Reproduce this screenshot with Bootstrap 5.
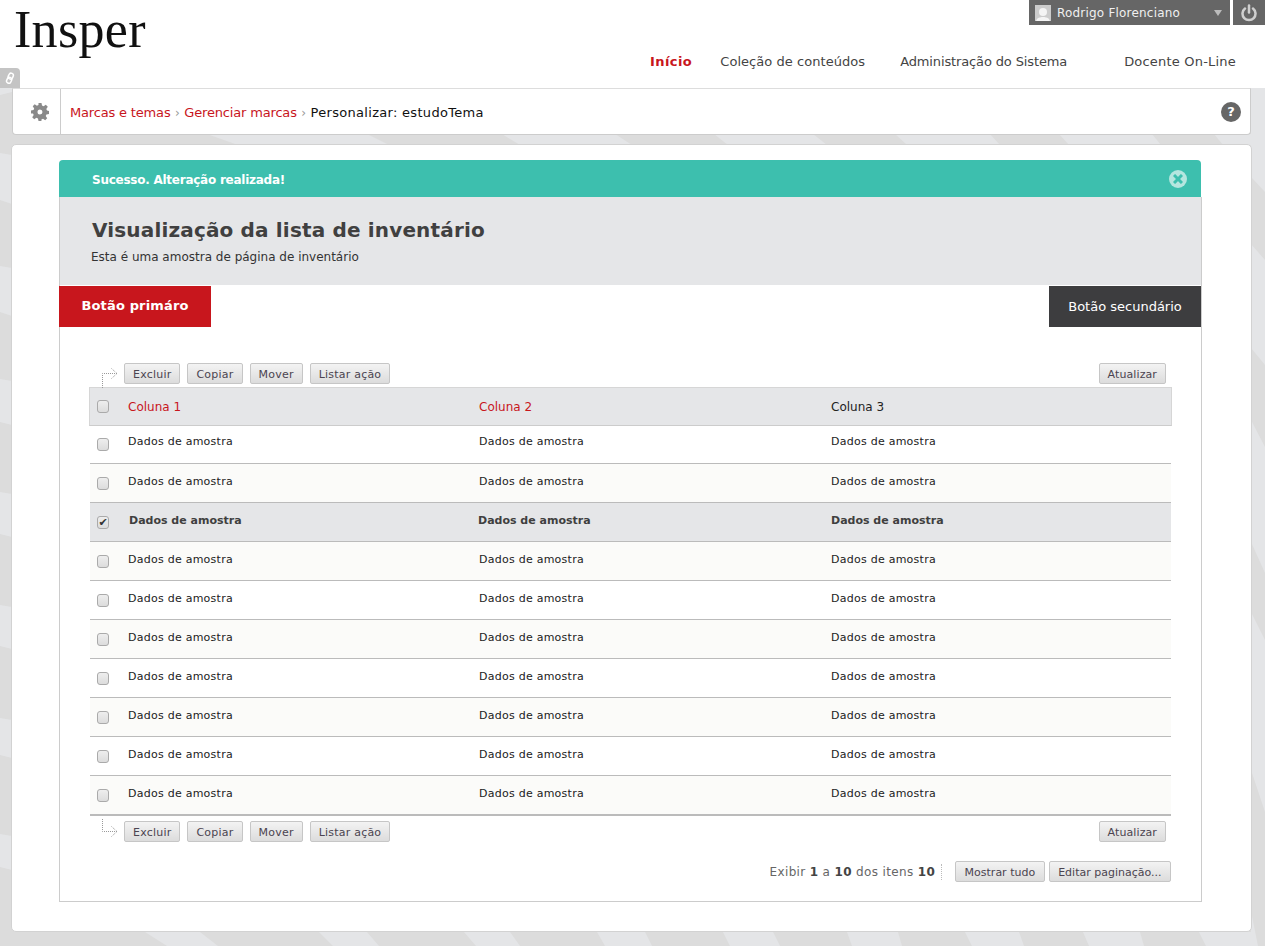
<!DOCTYPE html>
<html lang="pt-BR">
<head>
  <meta charset="UTF-8" />
  <title>Personalizar: estudoTema</title>
  <link href="https://cdn.jsdelivr.net/npm/bootstrap@5.3.0/dist/css/bootstrap.min.css" rel="stylesheet" />
  <style>
    html, body { height: 946px; overflow: hidden; }
    body {
      font-family: "DejaVu Sans", Verdana, sans-serif;
      font-size: 11px;
      color: #222;
      background-color: #dcdcdc;
    }
    .bg-art { position: absolute; left: 0; top: 0; z-index: -1; }
    .top-band { background: #fff; height: 88px; }
    .logo-word { font-family: "Liberation Serif", serif; font-size: 52px; letter-spacing: .3px; line-height: 59px; color: #111; padding-left: 14px; }
    .user-menu { width: 201px; height: 25px; background: #666; color: #f0f0f0; font-size: 12px; letter-spacing: .2px; padding: 0 6px; }
    .power-box { width: 32px; height: 25px; background: #666; margin-left: 3px; }
    .avatar-box { width: 16px; height: 16px; background: #ccc; margin-right: 6px; overflow: hidden; }
    .caret-down { width: 0; height: 0; border-left: 4px solid transparent; border-right: 4px solid transparent; border-top: 6px solid #bbb; margin-right: 2px; }
    .main-nav { padding-right: 29px; margin-top: 27px; font-size: 13px; color: #444; letter-spacing: .05px; }
    .main-nav span { margin-left: 35px; }
    .main-nav .active-tab { color: #c8161d; font-weight: 700; margin-right: -7px; letter-spacing: .45px; }
    .main-nav .admin-tab { letter-spacing: -.13px; }
    .main-nav .last-tab { margin-left: 57px; letter-spacing: .2px; }
    .link-tab { position: absolute; left: 0; top: 68px; width: 20px; height: 20px; background: #c4c4c4; border-top-right-radius: 4px; }
    .crumb-bar { height: 47px; margin: 0 14px 0 12px; background: #fff; border: 1px solid #ccc; border-top-color: #ddd; border-radius: 0 0 4px 4px; font-size: 13px; }
    .crumb-icon { width: 48px; border-right: 1px solid #ccc; padding-left: 6px; }
    .crumb-text { padding: 2px 0 0 9px; }
    .crumb-bar a { color: #c8161d; text-decoration: none; letter-spacing: -.17px; }
    .crumb-sep { color: #999; margin: 0 4.5px; font-size: 12px; }
    .crumb-now { color: #111; letter-spacing: .3px; }
    .help-dot { width: 20px; height: 20px; border-radius: 50%; background: #666; color: #fff; font-weight: 700; font-size: 13px; margin-right: 9px; }
    .page-sheet { margin: 9px 13px 0 11px; height: 788px; background: #fff; border: 1px solid #d2d2d2; border-radius: 5px; padding: 15px 49px 0 47px; }
    .ok-bar { height: 37px; margin-right: 1px; background: #3dbfae; color: #fff; font-weight: 700; font-size: 12px; letter-spacing: -.25px; border-radius: 4px 4px 0 0; padding: 0 14px 0 33px; }
    .ok-text { padding-top: 2px; }
    .close-dot { width: 18px; height: 18px; border-radius: 50%; background: #b5e6df; }
    .inner-box { height: 705px; border: 1px solid #ccc; border-top: 0; }
    .title-band { height: 88px; background: #e5e6e8; padding: 21px 32px 0; }
    .title-band h1 { font-size: 20px; letter-spacing: .16px; font-weight: 700; color: #404040; margin: 0 0 5px; line-height: 25px; }
    .title-band p { font-size: 12px; margin: 0 0 0 -1px; color: #333; }
    .btn-red { width: 152px; height: 41px; margin-top: 1px; margin-left: -1px; padding-bottom: 2px; background: #c8161d; color: #fff; font-weight: 700; font-size: 13px; letter-spacing: .15px; border: 0; border-radius: 0; }
    .btn-dark { width: 152px; height: 41px; margin-top: 1px; background: #3d3d3f; color: #fff; font-size: 13px; border: 0; border-radius: 0; }
    .list-area { padding: 36px 30px 0; }
    .action-row { height: 26px; padding-left: 12px; }
    .action-row.upper { height: 24px; }
    .mini-btn { height: 21px; padding: 2px 8px 0; font-size: 11px; letter-spacing: .22px; line-height: 17px; color: #4b4450; background: linear-gradient(#f3f3f3, #dcdcdc); border: 1px solid #c6c6c6; border-radius: 2px; margin-right: 7px; }
    .mini-btn.flush { margin-right: 5px; letter-spacing: .1px; }
    .arrow-hint { width: 22px; height: 20px; overflow: visible; }
    .grid-row { display: flex; align-items: center; height: 39px; border-bottom: 1px solid #bbb; background: #fff; letter-spacing: .25px; }
    .grid-row.striped { background: #fbfbf9; }
    .grid-row.chosen { background: #e5e6e8; font-weight: 700; color: #3f3f3f; letter-spacing: 0; }
    .grid-row.first { height: 38px; }
    .grid-row.head { background: #e5e6e8; border: 1px solid #d6d6d6; border-bottom-color: #ccc; font-size: 12px; letter-spacing: 0; margin-right: -1px; margin-left: -1px; }
    .grid-row.final { height: 40px; border-bottom: 2px solid #bbb; }
    .cell-check { width: 38px; padding-left: 7px; flex: none; }
    .cell-one { width: 351px; flex: none; }
    .cell-two { width: 352px; flex: none; }
    .cell-text { padding-bottom: 2px; }
    .first .cell-text { padding-bottom: 4px; }
    .final .cell-text { padding-bottom: 1px; }
    .head .cell-text { padding-bottom: 0; }
    .chosen .cell-one { padding-left: 1px; }
    .chosen .cell-two { margin-left: -1px; width: 353px; }
    .box-tick { display: block; width: 12px; height: 13px; background: linear-gradient(#eee, #dcdcdc); border: 1px solid #aaa; border-radius: 3px; color: #333; font-size: 11px; line-height: 11px; text-align: center; }
    .red-head { color: #c8161d; }
    .pager-row { margin-top: 19px; height: 21px; color: #666; font-size: 12px; letter-spacing: .35px; }
    .pager-row .mini-btn { padding: 2px 8.5px 0; letter-spacing: 0; }
    .pager-row .mini-btn.near { margin-right: 4px; }
    .pager-note { border-right: 1px dotted #bbb; padding-right: 6px; margin-right: 13px; height: 16px; line-height: 16px; }
    .pager-note b { color: #444; }
  </style>
</head>
<body class="position-relative">
  <svg class="bg-art" width="1265" height="946" viewBox="0 0 1265 946">
    <g fill="#e4e5e7">
      <path d="M207 134H367L389 145H238z"/>
      <path d="M502 134H615L632 145H520z"/>
      <path d="M714 134H813L827 145H728z"/>
      <path d="M895 134H990L1000 145H907z"/>
      <path d="M1059 134H1152L1161 145H1069z"/>
      <path d="M1214 134H1265V145H1223z"/>
      <path d="M1251 88H1265V946H1251z"/>
      <path d="M145 932H200L218 946H167z"/>
      <path d="M319 932H367L379 946H333z"/>
      <path d="M464 932H510L520 946H476z"/>
      <path d="M597 932H645L652 946H605z"/>
      <path d="M723 932H773L780 946H730z"/>
      <path d="M847 932H898L902 946H852z"/>
      <path d="M965 932H1019L1024 946H972z"/>
      <path d="M1083 932H1140L1144 946H1089z"/>
      <path d="M1199 932H1258L1263 946H1206z"/>
      <path d="M0 88H12V92L0 95z"/>
      <path d="M0 153L12 155V204L0 200z"/>
      <path d="M0 266L12 268V316L0 312z"/>
      <path d="M0 379L12 381V425L0 422z"/>
      <path d="M0 492L12 494V537L0 534z"/>
      <path d="M0 605L12 607V649L0 646z"/>
      <path d="M0 718L12 720V758L0 755z"/>
      <path d="M0 834L12 836V870L0 867z"/>
    </g>
    <g fill="#dcdcdc">
      <path d="M1251 177L1265 192V260L1251 244z"/>
      <path d="M1251 348L1265 365V447L1251 420z"/>
      <path d="M1251 542L1265 573V640L1251 612z"/>
      <path d="M1251 770L1265 812V946H1258L1251 911z"/>
    </g>
  </svg>

  <div class="top-band d-flex justify-content-between">
    <div class="logo-word">Insper</div>
    <div class="d-flex flex-column align-items-end">
      <div class="d-flex">
        <div class="user-menu d-flex align-items-center">
          <span class="avatar-box d-block">
            <svg width="16" height="16" viewBox="0 0 16 16"><circle cx="8" cy="6" r="4" fill="#f4f4f4"/><path d="M1 16c0-4 4-5 7-5s7 1 7 5z" fill="#f4f4f4"/></svg>
          </span>
          <span class="flex-grow-1">Rodrigo Florenciano</span>
          <span class="caret-down"></span>
        </div>
        <div class="power-box d-flex align-items-center justify-content-center">
          <svg width="16" height="18" viewBox="0 0 16 18" fill="none" stroke="#cfcfcf" stroke-width="2.5" stroke-linecap="round"><path d="M8 1.500v7"/><path d="M4 4.500a6.500 6.500 0 1 0 8 0"/></svg>
        </div>
      </div>
      <div class="main-nav d-flex">
        <span class="active-tab">Início</span>
        <span>Coleção de conteúdos</span>
        <span class="admin-tab">Administração do Sistema</span>
        <span class="last-tab">Docente On-Line</span>
      </div>
    </div>
  </div>
  <div class="link-tab d-flex align-items-center justify-content-center">
    <svg width="12" height="12" viewBox="0 0 12 12" fill="none" stroke="#fff" stroke-width="1.5"><rect x="4.500" y="0.800" width="4.500" height="6" rx="2.200" transform="rotate(25 6 4)"/><rect x="3" y="5.200" width="4.500" height="6" rx="2.200" transform="rotate(25 5 8)"/></svg>
  </div>

  <div class="crumb-bar d-flex align-items-center">
    <div class="crumb-icon h-100 d-flex align-items-center justify-content-center">
      <svg width="18" height="18" viewBox="0 0 18 18"><path fill="#8a8a8a" fill-rule="evenodd" d="M7.500 0h3l.5 2.600 1.600.7L14.800 1.800l2 2-1.500 2.200.7 1.600L18 8v3l-2.600.5-.7 1.600 1.500 2.200-2 2-2.200-1.500-1.600.7L10.500 18h-3l-.5-2.500-1.600-.7-2.200 1.500-2-2 1.500-2.200-.7-1.600L0 10.500V7.500l2.500-.5.7-1.600L1.700 3.200l2-2 2.200 1.500 1.600-.7zM9 6.500a2.500 2.500 0 1 0 0 5 2.500 2.500 0 0 0 0-5z"/></svg>
    </div>
    <div class="crumb-text flex-grow-1">
      <a href="#">Marcas e temas</a><span class="crumb-sep">›</span><a href="#">Gerenciar marcas</a><span class="crumb-sep">›</span><span class="crumb-now">Personalizar: estudoTema</span>
    </div>
    <div class="help-dot d-flex align-items-center justify-content-center">?</div>
  </div>

  <div class="page-sheet">
    <div class="ok-bar d-flex align-items-center justify-content-between">
      <span class="ok-text">Sucesso. Alteração realizada!</span>
      <span class="close-dot d-flex align-items-center justify-content-center">
        <svg width="10" height="10" viewBox="0 0 10 10" stroke="#3dbfae" stroke-width="3"><path d="M1 1l8 8M9 1l-8 8"/></svg>
      </span>
    </div>
    <div class="inner-box">
      <div class="title-band">
        <h1>Visualização da lista de inventário</h1>
        <p>Esta é uma amostra de página de inventário</p>
      </div>
      <div class="d-flex justify-content-between">
        <button class="btn-red" type="button">Botão primáro</button>
        <button class="btn-dark" type="button">Botão secundário</button>
      </div>
      <div class="list-area">
        <div class="action-row upper d-flex justify-content-between align-items-start" id="topActions"></div>
        <div id="gridRows"></div>
        <div class="action-row d-flex justify-content-between align-items-end" id="bottomActions"></div>
        <div class="pager-row d-flex justify-content-end align-items-center">
          <span class="pager-note">Exibir <b>1</b> a <b>10</b> dos itens <b>10</b></span>
          <button class="mini-btn near" type="button">Mostrar tudo</button>
          <button class="mini-btn me-0" type="button">Editar paginação...</button>
        </div>
      </div>
    </div>
  </div>

  <script src="https://cdn.jsdelivr.net/npm/bootstrap@5.3.0/dist/js/bootstrap.bundle.min.js"></script>
  <script>
    function actions(arrowPath) {
      return `<div class="d-flex align-items-center">
          <svg class="arrow-hint" viewBox="0 0 22 20" fill="none" stroke="#999" stroke-dasharray="1 1"><path d="${arrowPath}"/></svg>
          <button class="mini-btn" type="button">Excluir</button><button class="mini-btn" type="button">Copiar</button><button class="mini-btn" type="button">Mover</button><button class="mini-btn" type="button">Listar ação</button>
        </div>
        <button class="mini-btn flush" type="button">Atualizar</button>`;
    }
    document.getElementById("topActions").innerHTML = actions("M.5 24V9.500H15M9.500 4.500l5.500 5-5.500 5");
    document.getElementById("bottomActions").innerHTML = actions("M.5 -3V9.500H15M9.500 4.500l5.500 5-5.500 5");

    let html = `<div class="grid-row head">
        <div class="cell-check"><span class="box-tick"></span></div>
        <div class="cell-text cell-one red-head">Coluna 1</div>
        <div class="cell-text cell-two red-head">Coluna 2</div>
        <div class="cell-text">Coluna 3</div>
      </div>`;
    for (let i = 0; i < 10; i++) {
      let cls = "grid-row";
      if (i % 2 === 1) cls += " striped";
      if (i === 0) cls += " first";
      if (i === 2) cls += " chosen";
      if (i === 9) cls += " final";
      const tick = i === 2 ? "✔" : "";
      html += `<div class="${cls}">
        <div class="cell-check"><span class="box-tick">${tick}</span></div>
        <div class="cell-text cell-one">Dados de amostra</div>
        <div class="cell-text cell-two">Dados de amostra</div>
        <div class="cell-text">Dados de amostra</div>
      </div>`;
    }
    document.getElementById("gridRows").innerHTML = html;
  </script>
</body>
</html>
